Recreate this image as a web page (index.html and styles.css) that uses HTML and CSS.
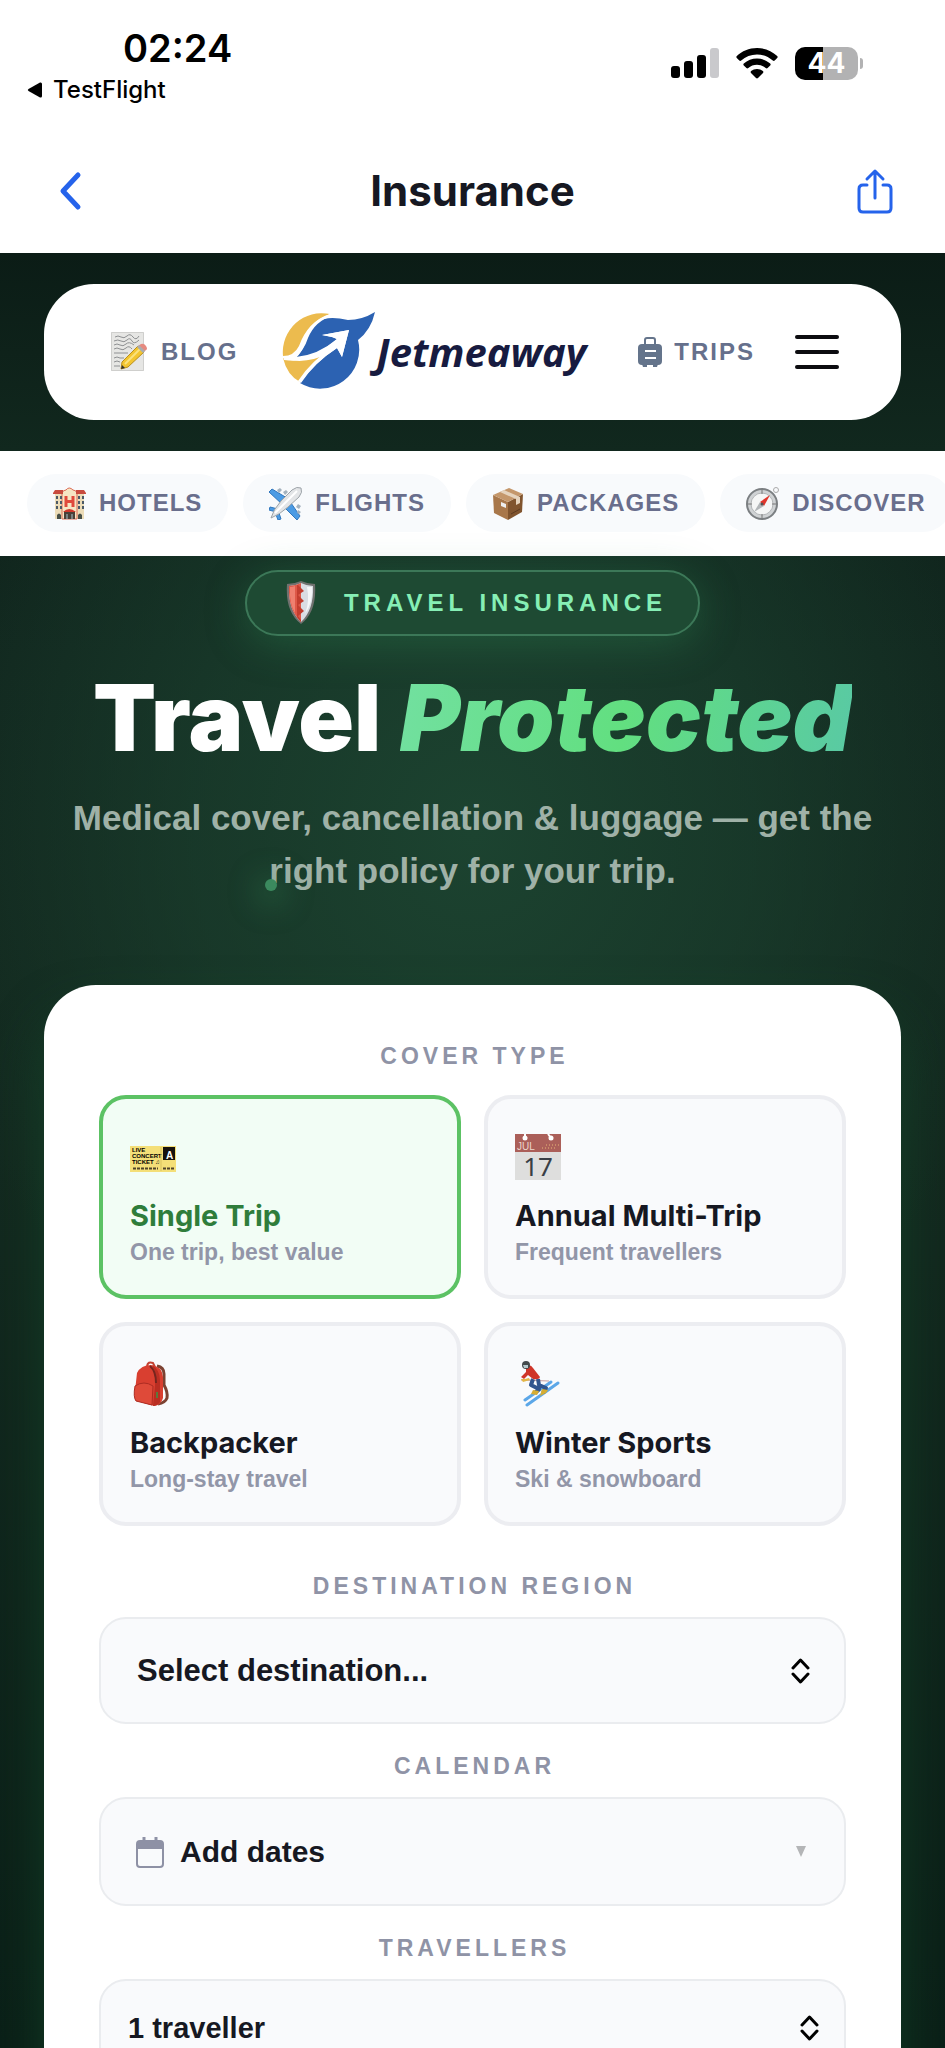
FILE: index.html
```html
<!DOCTYPE html>
<html lang="en">
<head>
    <meta charset="UTF-8">
    <meta name="viewport" content="width=device-width, initial-scale=1">
    <title>Insurance - Jetmeaway</title>
    <link rel="stylesheet" href="styles.css">
</head>
<body>
    <div class="status-bar">
        <div class="status-left">
            <span class="clock">02:24</span>
            <a class="back-app" href="#">
                <svg width="16" height="16" viewBox="0 0 16 16"><path d="M1.500 7Q0 8 1.500 9L13 15.500Q15 16 15 14V2Q15 0 13 .5z"/></svg>
                TestFlight
            </a>
        </div>
        <div class="status-icons">
            <svg width="48" height="30" viewBox="0 0 48 30">
                <rect x="0" y="18" width="9" height="12" rx="3"/>
                <rect x="13" y="13" width="9" height="17" rx="3"/>
                <rect x="26" y="7" width="9" height="23" rx="3"/>
                <rect x="39" y="0" width="9" height="30" rx="3" fill="#c9c9cc"/>
            </svg>
            <svg width="42" height="31" viewBox="0 0 42 31">
                <path d="M21 0C13 0 6 3 .8 8c-.6.6-.6 1.400 0 2l2.500 2.500c.6.6 1.300.6 1.900 0C9.500 8.600 15 6.400 21 6.400s11.500 2.200 15.800 6.100c.6.6 1.300.6 1.900 0l2.500-2.500c.6-.6.6-1.400 0-2C36 3 29 0 21 0z"/>
                <path d="M21 10.500c-5 0-9.700 1.900-13.200 5.100-.6.600-.6 1.400 0 2l2.600 2.500c.5.500 1.300.5 1.900 0 2.300-2.100 5.400-3.300 8.700-3.300s6.400 1.200 8.700 3.300c.6.5 1.400.5 1.900 0l2.600-2.500c.6-.6.6-1.400 0-2C30.700 12.400 26 10.500 21 10.500z"/>
                <path d="M21 21c-2.200 0-4.300.8-5.900 2.100-.6.5-.6 1.300-.1 1.900l5 5c.6.6 1.400.6 2 0l5-5c.5-.6.5-1.400-.1-1.900C25.300 21.800 23.200 21 21 21z"/>
            </svg>
            <span class="battery">44</span>
        </div>
    </div>

    <header class="app-header">
        <button class="icon-button" aria-label="Back">
            <svg width="24" height="40" viewBox="0 0 24 40" fill="none" stroke="#2563eb" stroke-width="5" stroke-linecap="round" stroke-linejoin="round"><path d="M20 4L5 20l15 16"/></svg>
        </button>
        <h1>Insurance</h1>
        <button class="icon-button" aria-label="Share">
            <svg width="36" height="46" viewBox="0 0 36 46" fill="none" stroke="#2563eb" stroke-width="3" stroke-linecap="round" stroke-linejoin="round"><path d="M10 17H6q-4 0-4 4v19q0 4 4 4h24q4 0 4-4V21q0-4-4-4h-4M18 30V3M10 11l8-8 8 8"/></svg>
        </button>
    </header>

    <main class="content">
        <div class="site-bar">
            <nav class="site-nav">
                <a class="nav-link" href="#">
                    <svg width="36" height="40" viewBox="0 0 36 40">
                        <rect width="33" height="39" fill="#e6e6e4"/>
                        <path d="M.5.500h32v38H.5z" fill="none" stroke="#cfcfcd"/>
                        <path d="M4 5q3-2 6 0t6-1 6 1 6-1M3 9q4-2 7 0t6-1 5 1 7-1M3 13q3-2 6 0t6-1 8 1M3 17q3-2 6 0t6-1 6 1M3 21h14M3 26q3-2 6 0h4M3 30q3-2 6 0M3 34h6" fill="none" stroke="#8e9092"/>
                        <path d="M11 30L27 14l6 6-16 15-7 2z" fill="#f3c530" stroke="#b98f1c"/>
                        <path d="M14 32L29 17" stroke="#fbe27c" stroke-width="2"/>
                        <path d="M27 14l3-2q3-1 5 2t0 4l-2 2z" fill="#e58a80"/>
                        <path d="M26 15l6 6 2-2-6-6z" fill="#a9adb0"/>
                        <path d="M10 37l1-4 3 3z" fill="#333"/>
                    </svg>
                    BLOG
                </a>
                <a class="logo" href="#">
                    <svg width="94" height="80" viewBox="0 0 94 80">
                        <path d="M48 2A39 39 0 0 0 1 44q9 3 16-7Q25 10 48 2z" fill="#ecbb4e"/>
                        <path d="M1 46q4 17 17 24 8-17 32-30Q22 54 1 46z" fill="#ecbb4e"/>
                        <path d="M93 0Q80 8 66 8 45 3 36 10 28 16 23 31 20 40 14 46 36 44 55 27L50 25 40 23 67 18 60 45 55 36Q32 51 18 71A39 39 0 0 0 76 28Q89 18 93 0z" fill="#2c62b2"/>
                        <path d="M48 2Q26 9 17 34 12 44 1 44L2 48Q26 52 50 36 30 48 16 69L19 71Q32 51 55 36L60 45 67 18 40 23 50 25 55 27Q36 43 14 45 22 38 26 26 33 9 50 4z" fill="#fff"/>
                    </svg>
                    <span>Jetmeaway</span>
                </a>
                <a class="nav-link nav-trips" href="#">
                    <svg width="24" height="30" viewBox="0 0 24 30" fill="#64748b">
                        <path d="M6 8V3q0-3 3-3h6q3 0 3 3v5h-2V3q0-1-1-1H9q-1 0-1 1v5z"/>
                        <rect y="7" width="24" height="21" rx="4"/>
                        <path d="M4 27h5v3H5zM15 27h5l-1 3h-4z"/>
                        <path d="M7 14h11M7 21h11" stroke="#fff" stroke-width="2"/>
                    </svg>
                    TRIPS
                </a>
                <button class="menu-button" aria-label="Menu"><span></span><span></span><span></span></button>
            </nav>
        </div>

        <nav class="categories">
            <a class="chip" href="#">
                <svg width="33" height="33" viewBox="0 0 33 33">
                    <path d="M2 6h29v26H2z" fill="#ecdcb8"/>
                    <path d="M9 6q1-3 4-3 3-4 7 0 3 0 4 3v26H9z" fill="#f6e6c4" stroke="#dc6a55"/>
                    <path d="M0 6l2-3h8v4H0zM23 3h8l2 3v1H23z" fill="#c84b3e"/>
                    <path d="M11.500 9h3v4h4V9h3v11h-3v-4h-4v4h-3z" fill="#e04a3c"/>
                    <path d="M3 9h2v3H3zm4 0h2v3H7zM3 14h2v3H3zm4 0h2v3H7zM3 19h2v3H3zm4 0h2v3H7zM25 9h2v3h-2zm4 0h2v3h-2zM25 14h2v3h-2zm4 0h2v3h-2zM25 19h2v3h-2zm4 0h2v3h-2z" fill="#4c5a68"/>
                    <path d="M11 24h11v8H11z" fill="#4a4038"/><path d="M10 25q6-6 13 0z" fill="#d2372b"/>
                    <path d="M4 32v-4q2-3 4 0v4zM25 32v-4q2-3 4 0v4z" fill="#475048"/><path d="M14 27v5M19 27v5" stroke="#a9c2cc"/>
                </svg>
                HOTELS
            </a>
            <a class="chip" href="#">
                <svg width="33" height="33" viewBox="0 0 33 33">
                    <path d="M18 11L3 2 0 5l14 13zM22 16l9 13-3 4L15 20zM9 22L1 20l-1 3 7 2zM9 23l3 9-3 1-3-8z" fill="#4b9be4" stroke="#3177bd"/>
                    <path d="M8 3l3-2 2 2-3 3zM14 5l3-2 2 2-3 3zM29 17l3 2-2 3-3-2zM29 23l3 2-2 2-2-1z" fill="#a4b2be"/>
                    <path d="M2 31q2-8 10-17L23 3q5-4 9-2 2 4-2 9L19 20Q10 28 2 31z" fill="#e3e5e7" stroke="#9ca3a8"/>
                    <path d="M6 26L28 4" stroke="#fff" stroke-width="2" fill="none"/>
                </svg>
                FLIGHTS
            </a>
            <a class="chip" href="#">
                <svg width="32" height="33" viewBox="0 0 32 33">
                    <path d="M1 8l15 7v18L2 26z" fill="#a8774a"/><path d="M31 7l-15 8v18l14-8z" fill="#80542e"/><path d="M1 8l16-7 14 6-15 8z" fill="#c4976b"/>
                    <path d="M8 5l16 7v6l4-2v-6L12 3z" fill="#e5d3bd"/><path d="M9 15l5 2v4l-5-2z" fill="#eee"/><path d="M19 27l9-5" stroke="#5d3b20"/>
                </svg>
                PACKAGES
            </a>
            <a class="chip" href="#">
                <svg width="33" height="33" viewBox="0 0 33 33">
                    <circle cx="30" cy="3" r="2.500" fill="none" stroke="#aaa"/><circle cx="16" cy="17" r="15" fill="#cfd2d4" stroke="#7b7f82" stroke-width="2"/>
                    <circle cx="16" cy="17" r="11" fill="#f5f6f6" stroke="#b3b6b8"/><path d="M16 3v4M16 27v4M2 17h4M26 17h4" stroke="#777"/>
                    <path d="M24 8l-10 7 4 4z" fill="#e0352b"/><path d="M8 25l6-10 4 4z" fill="#b2b6b9"/><circle cx="16" cy="17" r="1.500" fill="#555"/>
                </svg>
                DISCOVER
            </a>
        </nav>

        <section class="hero">
            <div class="hero-badge">
                <svg width="30" height="44" viewBox="0 0 30 44">
                    <path d="M15 0q7 3 14 3 2 28-14 40Q-1 31 1 3 8 3 15 0z" fill="#70716f"/>
                    <path d="M15 2q6 3 12 3 1 24-12 36Q2 29 3 5q6 0 12-3z" fill="#d9dce3"/>
                    <path d="M15 2v39Q2 29 3 5q6 0 12-3z" fill="#de5848"/>
                    <path d="M12 4l6 6-6 4 6 6-6 4 6 6-6 5 3 4v2l-4-5V4z" fill="#c33d2f"/>
                    <path d="M4 6q3 0 5-1v27Q3 22 4 6z" fill="#ef8070"/>
                    <path d="M21 6q3 14-2 27 8-11 7-27z" fill="#f5f6f8"/>
                </svg>
                TRAVEL INSURANCE
            </div>
            <h2>Travel <em>Protected</em></h2>
            <p class="hero-text">Medical cover, cancellation &amp; luggage — get the right policy for your trip.</p>
            <span class="spark"></span>
        </section>

        <form class="quote-card">
            <h3 class="field-label">COVER TYPE</h3>
            <div class="cover-grid">
                <button type="button" class="cover selected" aria-pressed="true">
                    <svg width="46" height="46" viewBox="0 0 46 46">
                        <rect y="12" width="46" height="26" fill="#f4df78"/><rect x="33" y="13" width="12" height="13" fill="#17120d"/>
                        <text x="2" y="18" class="ticket-text">LIVE</text><text x="2" y="24" class="ticket-text">CONCERT</text><text x="2" y="30" class="ticket-text">TICKET ♫</text>
                        <text x="36" y="25" class="ticket-zone">A</text>
                        <path d="M3 34.500h25M33 34.500h12" stroke="#51452a" stroke-width="2" stroke-dasharray="3 1"/><path d="M31 13v24" stroke="#d9c25e"/>
                    </svg>
                    <strong>Single Trip</strong>
                    <small>One trip, best value</small>
                </button>
                <button type="button" class="cover" aria-pressed="false">
                    <svg width="46" height="46" viewBox="0 0 46 46">
                        <rect width="46" height="46" fill="#dededd"/><rect width="46" height="18" fill="#ab5f59"/>
                        <circle cx="10" cy="4" r="2.500" fill="#fff"/><circle cx="36" cy="4" r="2.500" fill="#fff"/><path d="M10 4V0M36 4l-3-4" stroke="#fff" stroke-width="2"/>
                        <text x="2" y="16" class="month-text">JUL</text><text x="23" y="42" class="day-text">17</text>
                        <path d="M27 14h15M31 11h13" stroke="#c98b68" stroke-dasharray="1 2" stroke-width="2"/>
                    </svg>
                    <strong>Annual Multi-Trip</strong>
                    <small>Frequent travellers</small>
                </button>
                <button type="button" class="cover" aria-pressed="false">
                    <svg width="46" height="46" viewBox="0 0 46 46">
                        <path d="M17 5q1-5 6-3l2 4" fill="none" stroke="#c24232" stroke-width="2"/>
                        <path d="M27 5q7 1 7 8v11q4 7 3 13-2 5-9 6" fill="none" stroke="#7c4232" stroke-width="3"/>
                        <path d="M7 12q4-8 14-8 11 1 12 12v21q-2 7-9 8L7 40q-3-2-2-10z" fill="#d93f30"/>
                        <path d="M22 4q8 5 8 15v22q-3 4-7 4l2-20Q26 12 22 4z" fill="#b92e22"/>
                        <path d="M5 25q9-6 18 0l-1 19L6 40q-3-4-1-15z" fill="#df4a39" stroke="#ad2c22"/>
                        <path d="M20 5q6 5 6 17" fill="none" stroke="#74251e" stroke-width="2"/><path d="M27 31v6" stroke="#5d783c" stroke-width="2"/>
                    </svg>
                    <strong>Backpacker</strong>
                    <small>Long-stay travel</small>
                </button>
                <button type="button" class="cover" aria-pressed="false">
                    <svg width="46" height="46" viewBox="0 0 46 46">
                        <path d="M10 39l26-18M12 44l31-22" fill="none" stroke="#5ca7e8" stroke-width="3" stroke-linecap="round"/>
                        <path d="M6 19l28 1" stroke="#c8a0a0"/>
                        <path d="M18 18l-2 6 8 4-4 4M23 18l1 6 7 3-3 5" fill="none" stroke="#31558e" stroke-width="4" stroke-linejoin="round"/>
                        <path d="M11 6q4-4 7 1l7 9q-1 3-7 2l-5-4-4 4-3-2 5-5z" fill="#cf3529"/>
                        <path d="M6 18l2 3 7-2-1-2-4 1z" fill="#e4b646"/><circle cx="11" cy="4" r="4" fill="#434a4c"/><path d="M8 4h5v3H9z" fill="#b4c8cc"/>
                        <path d="M18 29l6 1-2 4-6-1zM27 28l6 1-2 3-6 3z" fill="#d6ad32"/>
                    </svg>
                    <strong>Winter Sports</strong>
                    <small>Ski &amp; snowboard</small>
                </button>
            </div>

            <label class="field-label" for="region">DESTINATION REGION</label>
            <select class="field" id="region">
                <option>Select destination...</option>
            </select>

            <label class="field-label" for="dates">CALENDAR</label>
            <button type="button" class="field date-field" id="dates">
                <svg width="28" height="32" viewBox="0 0 28 32" fill="none" stroke="#8e91a5" stroke-width="2">
                    <rect x="1" y="5" width="26" height="26" rx="3"/><path d="M2 6h24v6H2z" fill="#8e91a5"/><path d="M8 1v5M20 1v5" stroke-width="3"/>
                </svg>
                <span>Add dates</span>
                <svg class="caret" width="10" height="11" viewBox="0 0 10 11" fill="#b4b5b7"><path d="M0 0h10L5 11z"/></svg>
            </button>

            <label class="field-label" for="travellers">TRAVELLERS</label>
            <select class="field travellers" id="travellers">
                <option>1 traveller</option>
                <option>2 travellers</option>
            </select>
        </form>
    </main>
</body>
</html>
```
FILE: styles.css
```css
* {
    box-sizing: border-box;
}
body {
    margin: 0;
    height: 100vh;
    display: flex;
    flex-direction: column;
    overflow: hidden;
    font-family: "Liberation Sans", Arial, sans-serif;
    font-weight: bold;
    color: #161822;
    background: #fff;
}
svg {
    display: block;
    flex-shrink: 0;
}
a {
    color: inherit;
    text-decoration: none;
}
button, select {
    font: inherit;
    color: inherit;
    border: none;
    background: none;
}
h1, h2, h3, p {
    margin: 0;
}

/* phone status bar */
.status-bar {
    height: 124px;
    flex-shrink: 0;
    display: flex;
    justify-content: space-between;
    padding: 24px 87px 0 27px;
    color: #000;
    font-family: Inter, sans-serif;
}
.status-left {
    display: flex;
    flex-direction: column;
    align-items: flex-start;
}
.clock {
    padding-left: 96px;
    font-size: 38px;
    line-height: 48px;
    font-weight: 600;
}
.back-app {
    display: flex;
    align-items: center;
    gap: 10px;
    font-size: 24px;
    line-height: 36px;
    font-weight: 500;
}
.status-icons {
    display: flex;
    gap: 17px;
    padding-top: 22px;
    height: 56px;
    align-items: center;
}
.battery {
    position: relative;
    width: 63px;
    height: 33px;
    border-radius: 10px;
    background: linear-gradient(90deg, #000 44%, #b2b2b3 44%);
    color: #fff;
    font-size: 28px;
    line-height: 33px;
    font-weight: 700;
    text-align: center;
}
.battery::after {
    content: "";
    position: absolute;
    right: -5px;
    top: 11px;
    width: 3px;
    height: 11px;
    border-radius: 0 3px 3px 0;
    background: #b2b2b3;
}

.app-header {
    height: 129px;
    flex-shrink: 0;
    display: flex;
    align-items: center;
    justify-content: space-between;
    padding: 10px 52px 5px;
}
.app-header h1 {
    font: 700 42px/48px Inter, sans-serif;
}
.icon-button {
    width: 36px;
    padding: 0;
    display: flex;
    justify-content: center;
}

.content {
    flex: 1;
    min-height: 0;
    overflow: hidden;
    background:
        radial-gradient(ellipse 60% 620px at 50% 580px, #1c4330 0%, rgba(28, 67, 48, 0.6) 50%, rgba(28, 67, 48, 0) 100%),
        linear-gradient(#0c1d17 0, #11261e 400px, #13291f 900px, #0a1f17 100%);
}
.site-bar {
    padding: 31px 44px;
    background: linear-gradient(#0b1c16, #11281e);
}
.site-nav {
    height: 136px;
    display: flex;
    align-items: center;
    padding: 0 62px 0 67px;
    border-radius: 50px;
    background: #fff;
}
.nav-link {
    display: flex;
    align-items: center;
    gap: 14px;
    color: #66708c;
    font-size: 24px;
    letter-spacing: 2px;
}
.nav-trips {
    gap: 12px;
    margin-left: auto;
}
.logo {
    display: flex;
    align-items: center;
    margin-left: 44px;
    color: #171b40;
    font: italic 700 40px/60px "Noto Sans", sans-serif;
}
.menu-button {
    width: 44px;
    margin-left: 40px;
    padding: 0;
    display: grid;
    gap: 11px;
}
.menu-button span {
    height: 4px;
    border-radius: 2px;
    background: #0c0c10;
}

.categories {
    display: flex;
    gap: 15px;
    padding: 23px 27px 24px;
    overflow: hidden;
    background: #fff;
}
.chip {
    height: 58px;
    flex-shrink: 0;
    display: flex;
    align-items: center;
    gap: 13px;
    padding: 0 26px;
    border-radius: 29px;
    background: #f8fafc;
    color: #696e8c;
    font-size: 24px;
    letter-spacing: 1px;
}

.hero {
    position: relative;
    display: flex;
    flex-direction: column;
    align-items: center;
    padding: 14px 44px 88px;
    text-align: center;
}
.hero-badge {
    height: 66px;
    display: flex;
    align-items: center;
    gap: 28px;
    padding: 0 31px 0 39px;
    border: 2px solid #3c7858;
    border-radius: 33px;
    background: #1e4a33;
    box-shadow: 0 8px 40px rgba(50, 140, 85, 0.35);
    color: #86efb5;
    font-size: 24px;
    letter-spacing: 5px;
}
.hero h2 {
    margin-top: 28px;
    color: #fff;
    font: 900 92px/108px Inter, sans-serif;
}
.hero em {
    background: linear-gradient(100deg, #72e0a0, #62df80 50%, #59c9a4);
    background-clip: text;
    -webkit-background-clip: text;
    color: transparent;
}
.hero-text {
    margin-top: 19px;
    color: #9fb1a7;
    font-size: 35px;
    line-height: 53px;
}
.spark {
    position: absolute;
    left: 265px;
    top: 323px;
    width: 12px;
    height: 12px;
    border-radius: 50%;
    background: #3b8a5e;
    box-shadow: 0 6px 30px 8px rgba(60, 150, 95, 0.35);
}

.quote-card {
    margin: 0 44px;
    padding: 55px 55px 80px;
    border-radius: 52px;
    background: #fff;
    box-shadow: 0 30px 50px rgba(20, 70, 42, 0.7);
}
.field-label {
    display: block;
    padding-left: 4px;
    color: #8f93a6;
    font-size: 23px;
    line-height: 32px;
    letter-spacing: 4px;
    text-align: center;
}
.cover-grid {
    display: grid;
    grid-template-columns: 1fr 1fr;
    gap: 23px;
    margin: 23px 0 44px;
}
.cover {
    height: 204px;
    padding: 7px 27px 0;
    display: flex;
    flex-direction: column;
    align-items: flex-start;
    justify-content: center;
    border: 4px solid #ecedf1;
    border-radius: 27px;
    background: #f9fafc;
    text-align: left;
}
.cover strong {
    margin-top: 16px;
    font: 700 29px/40px Inter, sans-serif;
}
.cover small {
    color: #9296a8;
    font-size: 23px;
    line-height: 32px;
}
.cover.selected {
    border-color: #5cc264;
    background: #f2fdf5;
}
.cover.selected strong {
    color: #2f7d3b;
}
.ticket-text {
    font: 700 6px "Liberation Sans", sans-serif;
}
.ticket-zone {
    font: 700 10px "Liberation Sans", sans-serif;
    fill: #fff;
}
.month-text {
    font: 400 10px "Liberation Sans", sans-serif;
    fill: #edd5cb;
}
.day-text {
    font: 400 26px "Noto Sans", sans-serif;
    fill: #393f46;
    text-anchor: middle;
}

.field {
    width: 100%;
    height: 107px;
    display: flex;
    align-items: center;
    margin: 15px 0 26px;
    padding: 0 37px;
    border: 2px solid #eaecef;
    border-radius: 27px;
    background: #f9fafc;
    font-size: 31px;
}
select.field {
    appearance: none;
    padding-left: 36px;
    background: #f9fafc url("data:image/svg+xml,%3Csvg xmlns='http://www.w3.org/2000/svg' width='19' height='26' fill='none' stroke='black' stroke-width='3' stroke-linecap='round' stroke-linejoin='round'%3E%3Cpath d='M2 10l7.500-8 7.500 8M2 16l7.500 8 7.500-8'/%3E%3C/svg%3E") no-repeat right 34px center;
}
.date-field {
    height: 109px;
    gap: 16px;
    padding: 0 38px 0 35px;
    font-size: 30px;
}
.caret {
    margin-left: auto;
}
select.travellers {
    height: 98px;
    padding-left: 27px;
    background-position: right 25px center;
    font-size: 29px;
}
```
